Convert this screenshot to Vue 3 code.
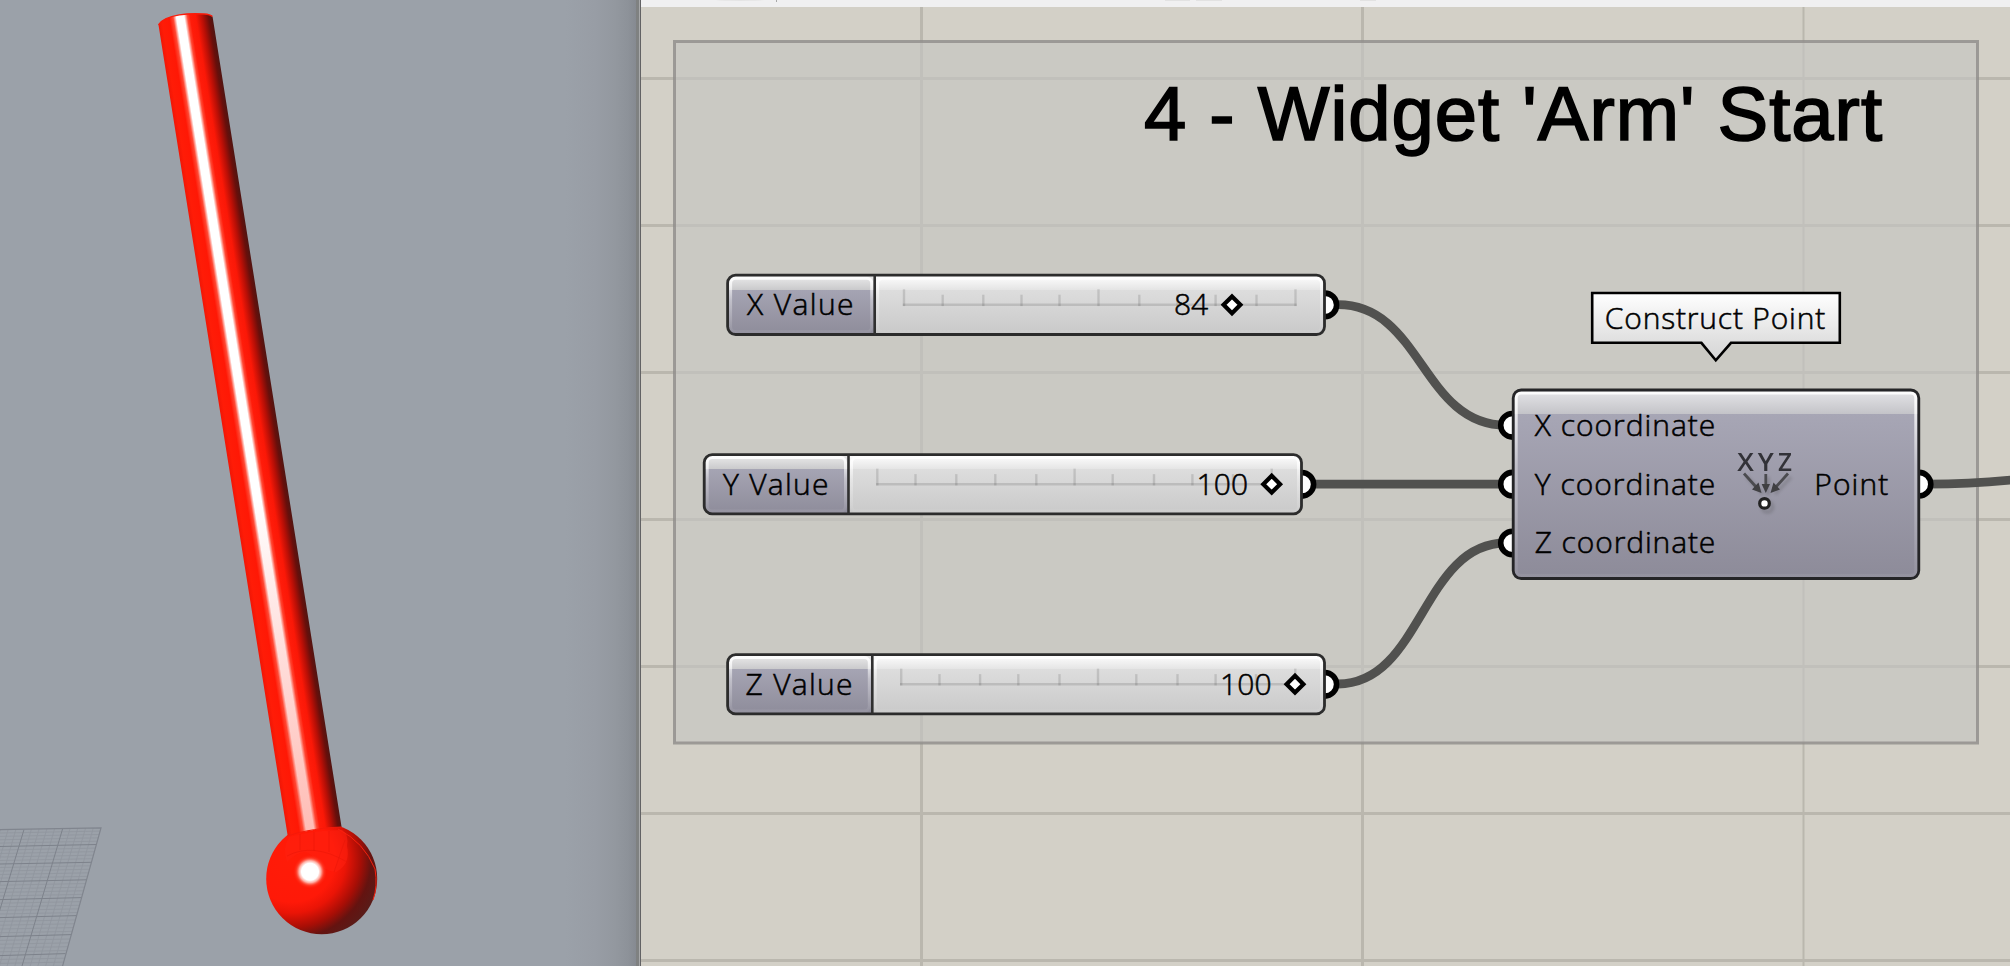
<script setup>
const gridX = [921.5, 1362.5, 1803.5]
const gridY = [78.5, 225.5, 372.5, 519.5, 666.5, 813.5, 960.5]

const sliders = [
  {
    label: 'X Value', value: '84', x: 727.6, y: 275.2, w: 596.9, split: 874.7,
    textX: 747, textW: 106.5, numX: 1174, numW: 34, knob: 1232,
    ticks: [904, 942.7, 983.3, 1021.5, 1059.5, 1098.5, 1139.3, 1177.5, 1215.6, 1256.5, 1295.5],
  },
  {
    label: 'Y Value', value: '100', x: 704.2, y: 454.6, w: 597.3, split: 848.5,
    textX: 723, textW: 105.5, numX: 1196.5, numW: 51.5, knob: 1271.7,
    ticks: [877.3, 915.5, 956.3, 995.3, 1036.3, 1074.6, 1112.7, 1154, 1192.4, 1233, 1271.7],
  },
  {
    label: 'Z Value', value: '100', x: 727.6, y: 654.6, w: 596.9, split: 872.3,
    textX: 745.5, textW: 107, numX: 1220, numW: 51.5, knob: 1295,
    ticks: [901.2, 939.5, 980.1, 1018.3, 1059.5, 1098, 1136.3, 1177.5, 1215.6, 1256, 1295.3],
  },
]

const inputs = [
  { label: 'X coordinate', y: 425.3 },
  { label: 'Y coordinate', y: 484.2 },
  { label: 'Z coordinate', y: 543 },
]

const wires = [
  'M1338 304.7C1422 304.7 1422 425.3 1506 425.3',
  'M1312 484.2H1502',
  'M1338 684C1422 684 1422 543 1506 543',
  'M1928 484.2C1955 484 1985 482.5 2016 479.5',
]

const majorRows = [
  [846.5, 96.5, 844.5], [864, 91.5, 862.3], [881.6, 86.5, 879.8], [899.6, 81.5, 897.6],
  [917.6, 76.5, 915.6], [936.6, 71, 934.6], [955.6, 65.5, 953.6],
]
const edges = [829.7, 846.5, 864, 881.6, 899.6, 917.6, 936.6, 955.6, 975]
const minorRows = []
for (let i = 0; i < edges.length - 1; i++) {
  for (let k = 1; k < 5; k++) minorRows.push(edges[i] + ((edges[i + 1] - edges[i]) * k) / 5)
}
const minorCols = []
for (let k = 1; k < 18; k++) if (k % 5) minorCols.push(101 - k * 7.7)
</script>

<template>
  <main class="screen">
    <section class="viewport">
      <svg class="scene" viewBox="0 0 636 966">
        <defs>
          <linearGradient id="rod" gradientUnits="userSpaceOnUse" x1="154.2" y1="0" x2="209.8" y2="0">
            <stop offset="0" stop-color="#f01606" />
            <stop offset=".08" stop-color="#ff1c07" />
            <stop offset=".22" stop-color="#ff1805" />
            <stop offset=".29" stop-color="#ff4934" />
            <stop offset=".35" stop-color="#fff" />
            <stop offset=".49" stop-color="#fff" />
            <stop offset=".55" stop-color="#ff4a36" />
            <stop offset=".6" stop-color="#ff1c0a" />
            <stop offset=".7" stop-color="#fb1807" />
            <stop offset=".82" stop-color="#b80f06" />
            <stop offset=".93" stop-color="#680f0b" />
            <stop offset="1" stop-color="#4f1512" />
          </linearGradient>
          <linearGradient id="rodFade" gradientUnits="userSpaceOnUse" x1="0" y1="500" x2="0" y2="836">
            <stop offset="0" stop-color="#ff1d0a" stop-opacity="0" />
            <stop offset="1" stop-color="#ff3a25" stop-opacity=".34" />
          </linearGradient>
          <radialGradient id="ball" gradientUnits="userSpaceOnUse" cx="292" cy="859" r="90">
            <stop offset="0" stop-color="#ff1c08" />
            <stop offset=".48" stop-color="#ff1908" />
            <stop offset=".6" stop-color="#ea1406" />
            <stop offset=".76" stop-color="#a80e06" />
            <stop offset=".88" stop-color="#641310" />
            <stop offset="1" stop-color="#5a1b18" />
          </radialGradient>
          <radialGradient id="shine">
            <stop offset="0" stop-color="#fff" />
            <stop offset=".5" stop-color="#fff" />
            <stop offset=".65" stop-color="#ffc9c0" stop-opacity=".85" />
            <stop offset=".82" stop-color="#ff5540" stop-opacity=".45" />
            <stop offset="1" stop-color="#ff1c08" stop-opacity="0" />
          </radialGradient>
          <clipPath id="plane"><path d="M0 829.7L101.5 827.5L62.3 966H0Z" /></clipPath>
        </defs>

        <g clip-path="url(#plane)">
          <g stroke="#8d929a" stroke-width=".8" opacity=".75">
            <path v-for="y in minorRows" :key="y" :d="`M0 ${y}L102 ${y - 2}`" />
            <path v-for="x in minorCols" :key="x" :d="`M${x} 828L${x - 40} 966`" />
          </g>
          <g stroke="#7d828b" stroke-width="1">
            <path v-for="r in majorRows" :key="r[0]" :d="`M0 ${r[0]}L${r[1]} ${r[2]}`" />
            <path d="M24 829.5L-17 966M62.7 828.5L22 966" />
          </g>
        </g>
        <path d="M0 829.7L101 827.8L62.3 967" fill="none" stroke="#80858e" stroke-width="1.2" />

        <circle cx="321.7" cy="878.7" r="55.5" fill="url(#ball)" />
        <path d="M289 837Q314 830 342 830Q349 834 347 846Q351 864 336 872Q325 872 314 858Q304 845 287 862Q282 848 289 837Z" fill="#ff2010" opacity=".55" />
        <path d="M300 834V850M314 832V851M329 831V852M345 840L334 872M287 856Q313 842 347 862" fill="none" stroke="#e51407" stroke-width="1" opacity=".45" />
        <path d="M338 829Q364 842 375 869Q378 886 373 900" fill="none" stroke="#f8200e" stroke-width="1" />
        <circle cx="310" cy="871.7" r="17" fill="url(#shine)" />

        <g transform="skewX(9.073)">
          <path d="M154.5 24.8Q160 17.5 177 14.8Q188 13.2 202 14Q210 14.8 209.9 17.3L209.5 827Q198 827 188 829Q166 832 154.2 836Z" fill="url(#rod)" />
          <path d="M170 500H186V829L170 832Z" fill="url(#rodFade)" />
          <path d="M154.5 24.8Q160 17.5 177 14.8Q188 13.2 202 14Q208 14.5 209.8 16.5" fill="none" stroke="#fb1b0a" stroke-width="1.3" />
        </g>
        <path d="M287.5 836Q300 831.5 315 829.5Q328 827 341.5 827" fill="none" stroke="#f51a0a" stroke-width="1.2" />
      </svg>
    </section>

    <div class="splitter"></div>

    <section class="editor">
      <header class="toolbar">
        <svg viewBox="641 0 1369 7">
          <ellipse cx="740" cy="-1" rx="28" ry="2" fill="#e4e4e4" />
          <path d="M776.5 0V2" stroke="#a8a8a8" />
          <path d="M1165 .5H1190M1196 .5H1222M1360 .5H1376" stroke="#e2e2e2" />
        </svg>
      </header>
      <svg class="canvas" viewBox="641 7 1369 959">
        <defs>
          <linearGradient id="label" x1="0" y1="0" x2="0" y2="1">
            <stop offset="0" stop-color="#ececec" />
            <stop offset=".25" stop-color="#c9c9cb" />
            <stop offset=".25" stop-color="#a5a4b3" />
            <stop offset="1" stop-color="#8e8c9a" />
          </linearGradient>
          <linearGradient id="track" x1="0" y1="0" x2="0" y2="1">
            <stop offset="0" stop-color="#fff" />
            <stop offset=".25" stop-color="#e4e4e4" />
            <stop offset=".25" stop-color="#dddddd" />
            <stop offset="1" stop-color="#c9c9c9" />
          </linearGradient>
          <linearGradient id="body" x1="0" y1="0" x2="0" y2="1">
            <stop offset="0" stop-color="#e6e6e8" />
            <stop offset=".125" stop-color="#c4c4c9" />
            <stop offset=".125" stop-color="#a7a6b5" />
            <stop offset="1" stop-color="#8d8b99" />
          </linearGradient>
          <linearGradient id="bevel" x1="0" y1="0" x2="0" y2="1">
            <stop offset="0" stop-color="#fff" stop-opacity=".9" />
            <stop offset=".4" stop-color="#fff" stop-opacity=".35" />
            <stop offset="1" stop-color="#fff" stop-opacity=".06" />
          </linearGradient>
          <linearGradient id="balloon" x1="0" y1="0" x2="0" y2="1">
            <stop offset="0" stop-color="#fff" />
            <stop offset=".75" stop-color="#dedede" />
            <stop offset="1" stop-color="#d6d6d6" />
          </linearGradient>
          <filter id="soft" x="-20%" y="-20%" width="140%" height="140%"><feGaussianBlur stdDeviation=".7" /></filter>
          <filter id="drop" x="-30%" y="-30%" width="160%" height="160%"><feGaussianBlur stdDeviation="1.6" /></filter>
        </defs>

        <g stroke="#bab7ae" stroke-width="3">
          <path v-for="x in gridX" :key="x" :d="`M${x} 7V966`" :stroke-width="x > 1800 ? 2 : 3" />
          <path v-for="y in gridY" :key="y" :d="`M641 ${y}H2010`" />
        </g>

        <rect x="674.5" y="41.5" width="1303" height="701.5" fill="#c5c5c1" fill-opacity=".65" />
        <rect x="674.5" y="41.5" width="1303" height="701.5" fill="none" stroke="#8e8c89" stroke-opacity=".8" stroke-width="3" />

        <text class="title" x="1144" y="140.3" textLength="738">4 - Widget 'Arm' Start</text>

        <g class="wires"><path v-for="d in wires" :key="d" :d="d" /></g>

        <g v-for="s in sliders" :key="s.label">
          <circle class="grip" :cx="s.x + s.w + .3" :cy="s.y + 29.7" r="11.8" />
          <rect :x="s.x" :y="s.y" :width="s.w" height="59.3" rx="8" fill="url(#track)" />
          <path :d="`M${s.split} ${s.y}H${s.x + 8}Q${s.x} ${s.y} ${s.x} ${s.y + 8}V${s.y + 51.3}Q${s.x} ${s.y + 59.3} ${s.x + 8} ${s.y + 59.3}H${s.split}Z`" fill="url(#label)" />
          <rect :x="s.x + 3" :y="s.y + 3" :width="s.split - s.x - 6" height="53.5" rx="5" fill="none" stroke="url(#bevel)" stroke-width="3" />
          <rect :x="s.split + 3" :y="s.y + 3" :width="s.x + s.w - s.split - 6" height="53.5" rx="5" fill="none" stroke="url(#bevel)" stroke-width="3" />
          <g class="ticks">
            <path :d="`M${s.ticks[0] - 1.2} ${s.y + 29.6}H${s.ticks[10] + 1.2}`" />
            <path v-for="(t, i) in s.ticks" :key="t" class="tick" :d="`M${t} ${s.y + (i % 5 ? 19.5 : 14)}V${s.y + 30.9}`" />
          </g>
          <rect :x="s.x" :y="s.y" :width="s.w" height="59.3" rx="8" fill="none" stroke="#2c2c2c" stroke-width="2.8" />
          <path :d="`M${s.split} ${s.y}v59.3`" stroke="#303030" stroke-width="2.6" />
          <text :x="s.textX" :y="s.y + 40.1" :textLength="s.textW">{{ s.label }}</text>
          <text :x="s.numX" :y="s.y + 40.1" :textLength="s.numW">{{ s.value }}</text>
          <path class="knob" :d="`M${s.knob} ${s.y + 21.2}l8.4 8.4l-8.4 8.4l-8.4 -8.4z`" />
        </g>

        <circle v-for="p in inputs" :key="p.label" class="grip" cx="1512.5" :cy="p.y" r="11.8" />
        <circle class="grip" cx="1919" cy="484.2" r="11.8" />
        <rect x="1513.2" y="390" width="405.6" height="188.5" rx="8" fill="url(#body)" />
        <rect x="1516.2" y="393" width="399.6" height="182.5" rx="5" fill="none" stroke="url(#bevel)" stroke-width="3" />
        <rect x="1513.2" y="390" width="405.6" height="188.5" rx="8" fill="none" stroke="#252527" stroke-width="2.8" />
        <text v-for="p in inputs" :key="p.label" x="1534.8" :y="p.y + 10.4" textLength="180.5">{{ p.label }}</text>
        <text x="1814.3" y="494.6" textLength="74">Point</text>

        <g filter="url(#drop)" opacity=".22" stroke="#444" stroke-width="4" fill="none">
          <path d="M1747 477L1763 494M1768 477V495M1791 477L1775 494" />
          <circle cx="1767.5" cy="507" r="5" />
        </g>
        <g class="glyph" filter="url(#soft)">
          <text x="1737.3" y="471" textLength="16.6" lengthAdjust="spacingAndGlyphs">X</text>
          <text x="1757.8" y="471" textLength="16" lengthAdjust="spacingAndGlyphs">Y</text>
          <text x="1778" y="471" textLength="14" lengthAdjust="spacingAndGlyphs">Z</text>
          <path class="shaft" d="M1744 473.5L1757 488M1765.8 474V487M1788 473.5L1775 488" />
          <path d="M1761.5 493L1752 489.5L1758.5 482.5ZM1765.8 493L1761.6 484H1770ZM1770.5 493L1773.5 482.5L1780 489.5Z" />
        </g>
        <circle cx="1764.5" cy="503.4" r="4.8" fill="#fff" stroke="#222" stroke-width="3.2" />

        <path d="M1592.2 293H1839.8V342.8H1731L1715.8 360.3L1701.4 342.8H1592.2Z" fill="url(#balloon)" stroke="#000" stroke-width="2.6" />
        <text x="1604.8" y="328.7" textLength="220.5">Construct Point</text>
      </svg>
    </section>
  </main>
</template>

<style>
body {
  margin: 0;
  overflow: hidden;
}
</style>

<style scoped>
.screen {
  display: grid;
  grid-template-columns: 636px 5px 1fr;
  width: 2010px;
  height: 966px;
  overflow: hidden;
}
.viewport {
  background: linear-gradient(90deg, #9ba1a9 0, #9ba1a9 565px, #989da5 595px, #93989f 615px, #8d9299 628px, #868a91 636px);
}
.scene {
  display: block;
  width: 636px;
  height: 966px;
}
.splitter {
  background: linear-gradient(90deg, #7f8181 3px, #a8a9aa 3px, #a8a9aa 4px, #626264 4px);
}
.editor {
  display: flex;
  flex-direction: column;
  background: #d3d0c7;
}
.toolbar {
  height: 7px;
  background: #f0f0f1;
}
.toolbar svg {
  display: block;
  width: 1369px;
  height: 7px;
}
.canvas {
  display: block;
  width: 1369px;
  height: 959px;
}
.canvas text {
  font-family: "Open Sans", "Noto Sans", sans-serif;
  font-size: 30px;
  font-weight: 300;
  fill: #000;
  stroke: #000;
  stroke-width: 0.55;
}
.canvas .title {
  font-family: "Liberation Sans", Arial, sans-serif;
  font-size: 76px;
  font-weight: 400;
  stroke-width: 1.7;
}
.wires path {
  fill: none;
  stroke: #51514f;
  stroke-width: 8.8;
}
.grip {
  fill: #fff;
  stroke: #000;
  stroke-width: 5.6;
}
.ticks path {
  fill: none;
  stroke: #000;
  stroke-opacity: 0.12;
  stroke-width: 2.6;
}
.ticks .tick {
  stroke-width: 2.4;
}
.knob {
  fill: #fff;
  stroke: #000;
  stroke-width: 4.2;
}
.glyph {
  fill: #3f3f43;
}
.canvas .glyph text {
  font-size: 25.5px;
  font-weight: 600;
  fill: #333337;
  stroke: none;
}
.glyph .shaft {
  stroke: #4c4c50;
  stroke-width: 2.8;
  fill: none;
}
</style>
